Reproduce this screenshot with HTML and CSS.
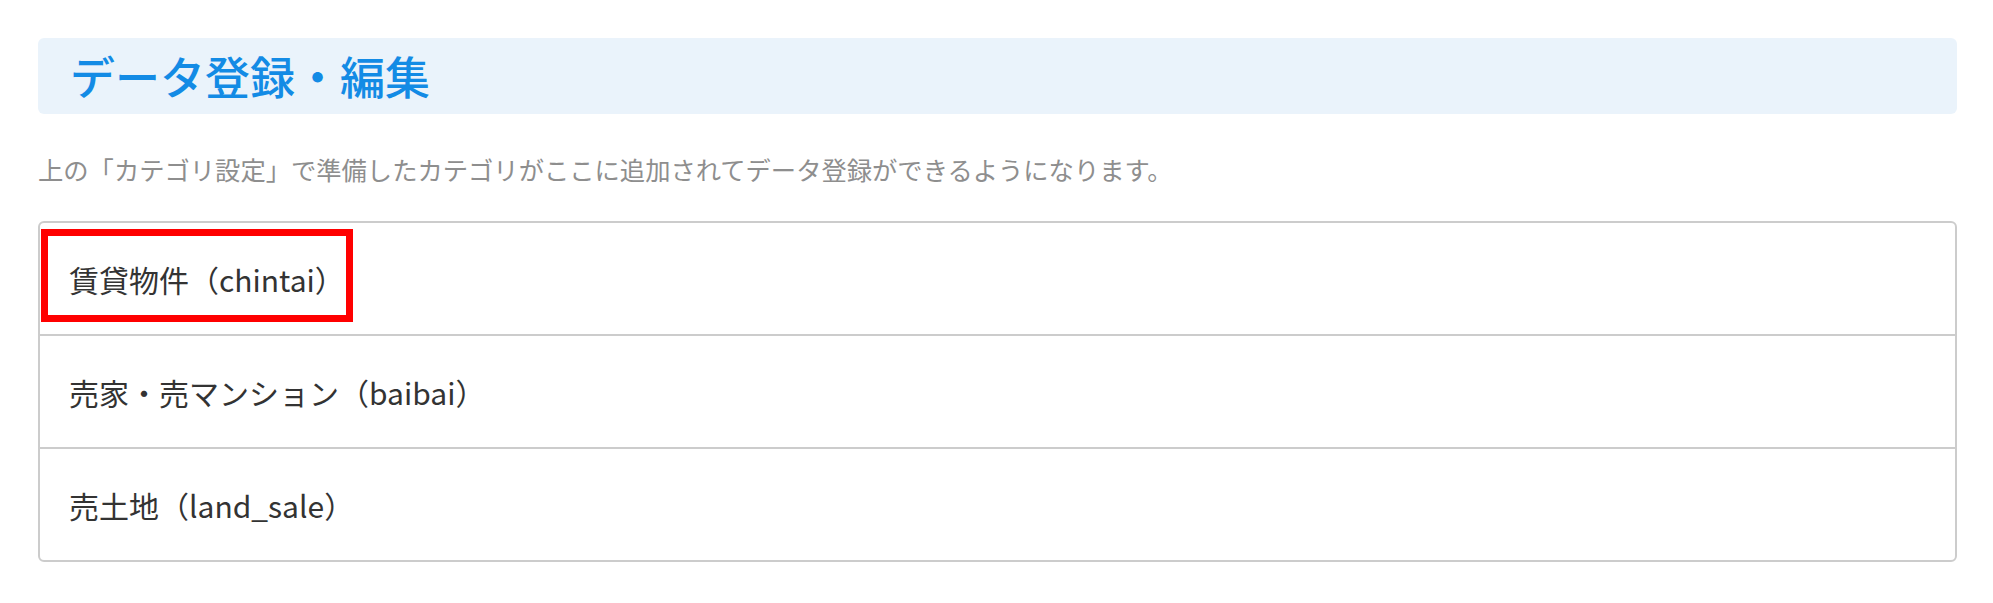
FILE: index.html
```html
<!DOCTYPE html>
<html lang="ja">
<head>
<meta charset="utf-8">
<title>データ登録・編集</title>
<link rel="stylesheet" href="styles.css">
</head>
<body>
<div class="page">
  <div class="section-head">
    <h2 class="section-title">データ登録・編集</h2>
  </div>
  <p class="note">上の「カテゴリ設定」で準備したカテゴリがここに追加されてデータ登録ができるようになります。</p>
  <ul class="cat-list">
    <li class="cat-item is-marked"><span class="cat-name">賃貸物件（chintai）</span><span class="mark"></span></li>
    <li class="cat-item"><span class="cat-name">売家・売マンション（baibai）</span></li>
    <li class="cat-item"><span class="cat-name">売土地（land_sale）</span></li>
  </ul>
</div>
</body>
</html>
```

FILE: styles.css
```css
html, body {
  margin: 0;
  padding: 0;
  background: #ffffff;
}
body {
  font-family: "Noto Sans CJK JP", "Noto Sans", sans-serif;
  color: #333333;
}
.page {
  padding: 38px 36px 0 38px;
}
.section-head {
  background: #eaf3fb;
  border-radius: 6px;
  height: 76px;
  display: flex;
  align-items: center;
  padding-left: 32px;
}
.section-title {
  margin: 0;
  font-size: 45px;
  line-height: 76px;
  font-weight: 500;
  color: #138be5;
  letter-spacing: 0;
}
.note {
  margin: 36px 0 33px 0;
  font-size: 25.3px;
  line-height: 38px;
  color: #8e8e8e;
}
.cat-list {
  list-style: none;
  margin: 0;
  padding: 0;
  border: 2px solid #cccccc;
  border-radius: 6px;
}
.cat-item {
  position: relative;
  height: 111px;
  display: flex;
  align-items: center;
  padding-left: 29px;
  font-size: 30px;
  color: #333333;
}
.cat-item + .cat-item {
  border-top: 2px solid #cccccc;
}
.mark {
  position: absolute;
  left: 1px;
  top: 6px;
  width: 298px;
  height: 79px;
  border: 7px solid #ff0000;
}
```
